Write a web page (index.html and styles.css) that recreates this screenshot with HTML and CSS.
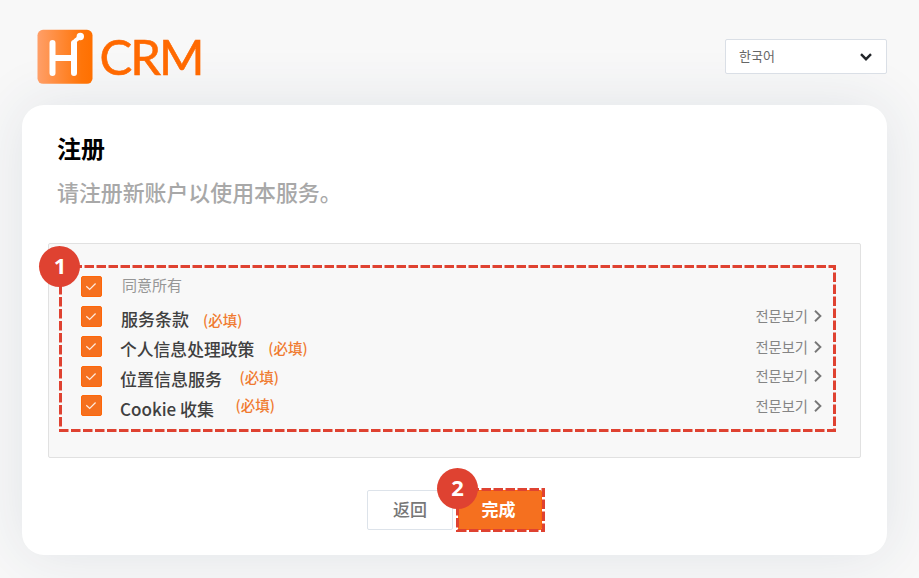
FILE: index.html
```html
<!DOCTYPE html>
<html lang="zh-CN">
<head>
<meta charset="utf-8">
<title>H CRM</title>
<link rel="stylesheet" href="styles.css">
</head>
<body>
<svg class="defs" width="0" height="0" aria-hidden="true">
  <symbol id="check" viewBox="0 0 21 21"><path d="M4.700 10.200l3.800 3.600 6.500-6.600" fill="none" stroke="#ffe9dc" stroke-width="1.400"/></symbol>
  <symbol id="next" viewBox="0 0 8 12"><path d="M1 .8l5.400 5.200L1 11.200" fill="none" stroke="#777" stroke-width="1.900"/></symbol>
</svg>
<header class="header">
  <div class="logo">
    <svg width="56" height="56" viewBox="0 0 56 56">
      <defs><linearGradient id="lg"><stop offset="0" stop-color="#ff9f68"/><stop offset=".8" stop-color="#ff7509"/><stop offset="1" stop-color="#ff7000"/></linearGradient></defs>
      <rect x=".5" y=".8" width="55" height="54" rx="5.500" fill="url(#lg)"/>
      <path d="M15.500 14v30M37 44V14M15.500 29H37" fill="none" stroke="#fff" stroke-width="6" stroke-linecap="round"/>
      <path d="M36.500 14l2-2.500 4.500-3.500" fill="none" stroke="#fff" stroke-width="4" stroke-linecap="round"/>
      <circle cx="43.300" cy="7.500" r="3.700" fill="#fff"/>
    </svg>
    <span class="logo-text">CRM</span>
  </div>
  <div class="language"><span>한국어</span>
    <svg width="12" height="8" viewBox="0 0 12 8"><path d="M1 1.200l5 5 5-5" fill="none" stroke="#222529" stroke-width="2.400"/></svg>
  </div>
</header>
<main class="card">
  <h1>注册</h1>
  <p class="subtitle">请注册新账户以使用本服务。</p>
  <section class="terms">
    <svg class="outline" width="777" height="167"><rect x="1.500" y="1.500" width="774" height="164"/></svg>
    <span class="badge badge-one">1</span>
    <div class="row all"><svg class="box"><use href="#check"/></svg><span class="name">同意所有</span></div>
    <div class="row service"><svg class="box"><use href="#check"/></svg><span class="name">服务条款</span><span class="required">(必填)</span><a class="more">전문보기<svg width="8" height="12"><use href="#next"/></svg></a></div>
    <div class="row privacy"><svg class="box"><use href="#check"/></svg><span class="name">个人信息处理政策</span><span class="required">(必填)</span><a class="more">전문보기<svg width="8" height="12"><use href="#next"/></svg></a></div>
    <div class="row location"><svg class="box"><use href="#check"/></svg><span class="name">位置信息服务</span><span class="required">(必填)</span><a class="more">전문보기<svg width="8" height="12"><use href="#next"/></svg></a></div>
    <div class="row cookie"><svg class="box"><use href="#check"/></svg><span class="name">Cookie 收集</span><span class="required">(必填)</span><a class="more">전문보기<svg width="8" height="12"><use href="#next"/></svg></a></div>
  </section>
  <div class="actions">
    <div class="button back">返回</div>
    <div class="button done">完成
      <svg class="outline" width="89" height="44"><rect x="1.500" y="1.500" width="86" height="41"/></svg>
      <span class="badge badge-two">2</span>
    </div>
  </div>
</main>
</body>
</html>
```
FILE: styles.css
```css
* { box-sizing: border-box; }
body {
  margin: 0;
  width: 919px;
  height: 578px;
  overflow: hidden;
  background: #f8f8f8;
  font-family: "Noto Sans CJK SC", sans-serif;
}
svg { display: block; flex: none; }
.defs { position: absolute; }
.header {
  height: 105px;
  padding: 29px 32px 0 37px;
  display: flex;
  justify-content: space-between;
  align-items: flex-start;
}
.logo { display: flex; }
.logo-text {
  margin-left: 6.500px;
  font: 400 49px/54px Lato, sans-serif;
  letter-spacing: -2px;
  color: #ff6900;
  -webkit-text-stroke: .6px #ff6900;
}
.language {
  width: 162px;
  height: 35px;
  margin-top: 10px;
  padding: 0 14px 0 13px;
  display: flex;
  align-items: center;
  justify-content: space-between;
  background: #fff;
  border: 1px solid #dadfe6;
  border-radius: 2px;
  color: #666;
  font: 13px/32px "Noto Sans CJK KR", sans-serif;
}
.language span { margin-top: -2px; }
.card {
  width: 865px;
  height: 450px;
  margin-left: 22px;
  padding: 26px 26px 0;
  background: #fff;
  border-radius: 22px;
  box-shadow: 0 0 60px rgba(40, 60, 100, .11);
}
h1 {
  margin: 0 0 0 9px;
  font-size: 24px;
  line-height: 34px;
  font-weight: 700;
  color: #000;
}
.subtitle {
  margin: 5px 0 0 9px;
  font-size: 21.900px;
  line-height: 44px;
  font-weight: 500;
  color: #a8a8a8;
}
.terms {
  position: relative;
  width: 813px;
  height: 215px;
  margin-top: 29px;
  padding: 28px 38px 0 32px;
  background: #f8f8f8;
  border: 1px solid #e1e1e1;
  border-radius: 2px;
}
.outline { position: absolute; overflow: visible; }
.outline rect {
  fill: none;
  stroke: #df4231;
  stroke-width: 3;
  stroke-dasharray: 9.500 2.500;
}
.terms .outline { left: 10px; top: 21px; }
.badge {
  position: absolute;
  width: 41px;
  height: 41px;
  border-radius: 50%;
  background: #df4231;
  color: #fff;
  font: 700 22px/39px "Noto Sans", sans-serif;
  text-align: center;
}
.badge-one { left: -10px; top: 2px; padding-left: 1px; }
.row {
  height: 30px;
  padding-top: 4px;
  display: flex;
  align-items: flex-start;
  line-height: 22px;
}
.box {
  width: 21px;
  height: 21px;
  background: #f5701f;
  border: 1px solid #ff6608;
  border-radius: 2px;
}
.name {
  margin: 2px 0 0 18px;
  font-size: 17px;
  font-weight: 500;
  color: #404040;
}
.all .name { margin: -2px 0 0 20px; font-size: 15px; font-weight: 400; color: #969696; }
.service .name { margin-left: 19px; }
.privacy .name { font-size: 16.800px; }
.required {
  margin: 3px 0 0 14px;
  font-size: 14.500px;
  font-weight: 500;
  color: #f07b30;
}
.privacy .required { margin: 1px 0 0 14px; }
.location .required { margin: 0 0 0 17.500px; }
.cookie { padding-top: 3px; }
.cookie .name { margin: 3px 0 0 18px; }
.cookie .required { margin: -1px 0 0 21.500px; }
.more {
  margin-left: auto;
  display: flex;
  align-items: center;
  gap: 6px;
  font: 14.300px/21px "Noto Sans CJK KR", sans-serif;
  color: #858585;
}
.service .more, .location .more { margin-top: -1px; }
.actions {
  display: flex;
  margin: 32px 0 0 319px;
  gap: 5px;
}
.button {
  position: relative;
  width: 86px;
  height: 40px;
  border: 1px solid #dde3ea;
  border-radius: 2px;
  color: #777;
  font-size: 17px;
  font-weight: 500;
  line-height: 36px;
  text-align: center;
}
.done {
  width: 84px;
  padding-right: 3px;
  line-height: 35px;
  background: #f5701f;
  border-color: #ff6608;
  color: #fff;
  font-weight: 700;
}
.done .outline { left: -3px; top: -3px; }
.badge-two { left: -22px; top: -23px; }
```
